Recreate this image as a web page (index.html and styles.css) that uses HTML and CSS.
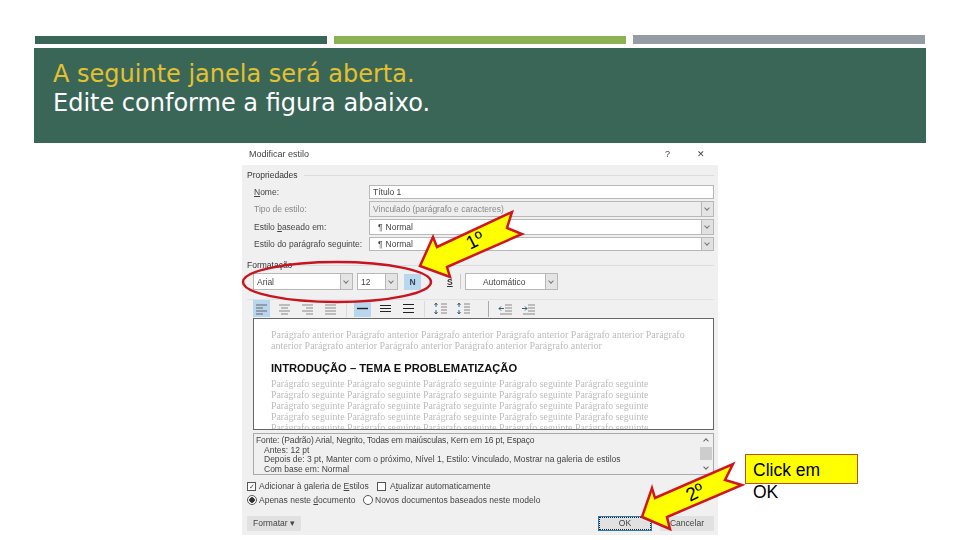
FILE: index.html
```html
<!DOCTYPE html>
<html lang="pt">
<head>
    <meta charset="UTF-8">
    <meta name="viewport" content="width=device-width, initial-scale=1.0">
    <title>Modificar estilo</title>
    <link rel="stylesheet" href="styles.css">
</head>
<body>
    <svg class="defs" width="0" height="0">
        <symbol id="al-left" viewBox="0 0 17 17"><path d="M3 5h11M3 8h7M3 11h11M3 14h7" stroke="#666" fill="none"/></symbol>
        <symbol id="al-center" viewBox="0 0 17 17"><path d="M3 5h11M5 8h7M3 11h11M5 14h7" stroke="#888" fill="none"/></symbol>
        <symbol id="al-right" viewBox="0 0 17 17"><path d="M3 5h11M7 8h7M3 11h11M7 14h7" stroke="#888" fill="none"/></symbol>
        <symbol id="al-just" viewBox="0 0 17 17"><path d="M3 5h11M3 8h11M3 11h11M3 14h11" stroke="#888" fill="none"/></symbol>
        <symbol id="sp-a" viewBox="0 0 17 17"><path d="M3 8.500h11" stroke="#222" stroke-width="1.400"/></symbol>
        <symbol id="sp-b" viewBox="0 0 17 17"><path d="M3 5.500h11M3 8.500h11M3 11.500h11" stroke="#222"/></symbol>
        <symbol id="sp-c" viewBox="0 0 17 17"><path d="M3 4.500h11M3 8.500h11M3 12.500h11" stroke="#222"/></symbol>
        <symbol id="para-up" viewBox="0 0 17 17"><path d="M9 4h6M9 7h6M9 10h6M9 13h6" stroke="#888"/><path d="M4 7V3M2.500 5 4 3l1.500 2M4 10v4M2.500 12 4 14l1.500-2" stroke="#355f80" fill="none"/></symbol>
        <symbol id="indent" viewBox="0 0 17 17"><path d="M8 5h7M8 8h7M8 11h7M3 14h12" stroke="#888"/><path d="M2 8.500h5M4 6.500l-2 2 2 2" stroke="#2f6470" fill="none"/></symbol>
        <symbol id="outdent" viewBox="0 0 17 17"><path d="M8 5h7M8 8h7M8 11h7M3 14h12" stroke="#888"/><path d="M2 8.500h5M5 6.500l2 2-2 2" stroke="#2f6470" fill="none"/></symbol>
    </svg>

    <div class="bars">
        <div class="bar bar-green"></div>
        <div class="bar bar-lime"></div>
        <div class="bar bar-grey"></div>
    </div>

    <div class="banner">
        <p class="banner-first">A seguinte janela será aberta.</p>
        <p>Edite conforme a figura abaixo.</p>
    </div>

    <div class="dialog">
        <div class="dialog-title">
            <span>Modificar estilo</span>
            <span class="title-help">?</span>
            <span class="title-close">✕</span>
        </div>
        <div class="dialog-body">
            <div class="legend">Propriedades</div>
            <div class="prop-rows">
                <label><u>N</u>ome:</label>
                <div class="field">Título 1</div>
                <label class="off">Tipo de estilo:</label>
                <div class="field field-off">Vinculado (parágrafo e caracteres)<span class="drop"></span></div>
                <label>Estilo <u>b</u>aseado em:</label>
                <div class="field"><span class="pilcrow">¶</span> Normal<span class="drop drop-on"></span></div>
                <label>Estilo do parágrafo seguinte:</label>
                <div class="field"><span class="pilcrow">¶</span> Normal<span class="drop drop-on"></span></div>
            </div>

            <div class="legend legend-format">Formatação</div>
            <div class="font-row">
                <div class="field font-name">Arial<span class="drop"></span></div>
                <div class="field font-size">12<span class="drop"></span></div>
                <div class="bold-btn">N</div>
                <div class="under-btn">S</div>
                <div class="font-sep"></div>
                <div class="field font-color">Automático<span class="drop"></span></div>
            </div>
            <div class="icon-row">
                <svg class="tool tool-on"><use href="#al-left"/></svg>
                <svg class="tool"><use href="#al-center"/></svg>
                <svg class="tool"><use href="#al-right"/></svg>
                <svg class="tool"><use href="#al-just"/></svg>
                <div class="tool-sep"></div>
                <svg class="tool tool-on"><use href="#sp-a"/></svg>
                <svg class="tool"><use href="#sp-b"/></svg>
                <svg class="tool"><use href="#sp-c"/></svg>
                <div class="tool-sep"></div>
                <svg class="tool"><use href="#para-up"/></svg>
                <svg class="tool"><use href="#para-up"/></svg>
                <div class="tool-sep tool-sep-dark"></div>
                <svg class="tool"><use href="#indent"/></svg>
                <svg class="tool"><use href="#outdent"/></svg>
            </div>

            <div class="preview">
                <p class="ghost ghost-before">Parágrafo anterior Parágrafo anterior Parágrafo anterior Parágrafo anterior Parágrafo anterior Parágrafo<br>
                anterior Parágrafo anterior Parágrafo anterior Parágrafo anterior Parágrafo anterior</p>
                <p class="preview-title">INTRODUÇÃO – TEMA E PROBLEMATIZAÇÃO</p>
                <p class="ghost">Parágrafo seguinte Parágrafo seguinte Parágrafo seguinte Parágrafo seguinte Parágrafo seguinte<br>
                Parágrafo seguinte Parágrafo seguinte Parágrafo seguinte Parágrafo seguinte Parágrafo seguinte<br>
                Parágrafo seguinte Parágrafo seguinte Parágrafo seguinte Parágrafo seguinte Parágrafo seguinte<br>
                Parágrafo seguinte Parágrafo seguinte Parágrafo seguinte Parágrafo seguinte Parágrafo seguinte<br>
                Parágrafo seguinte Parágrafo seguinte Parágrafo seguinte Parágrafo seguinte Parágrafo seguinte</p>
            </div>

            <div class="desc">
                <div class="desc-text">
                    <div class="desc-first">Fonte: (Padrão) Arial, Negrito, Todas em maiúsculas, Kern em 16 pt, Espaço</div>
                    <div class="desc-sub">Antes: 12 pt</div>
                    <div class="desc-sub">Depois de: 3 pt, Manter com o próximo, Nível 1, Estilo: Vinculado, Mostrar na galeria de estilos</div>
                    <div class="desc-sub">Com base em: Normal</div>
                </div>
                <div class="scroll">
                    <span class="scroll-arrow scroll-up"></span>
                    <span class="scroll-thumb"></span>
                    <span class="scroll-arrow scroll-down"></span>
                </div>
            </div>

            <div class="option-row">
                <span class="check">✓</span><span class="option-a">Adicionar à galeria de <u>E</u>stilos</span>
                <span class="check check-empty"></span><span>A<u>t</u>ualizar automaticamente</span>
            </div>
            <div class="option-row option-radios">
                <span class="radio radio-on"></span><span class="option-b">Apenas neste <u>d</u>ocumento</span>
                <span class="radio"></span><span>Novos documentos baseados neste modelo</span>
            </div>

            <div class="button-row">
                <div class="btn btn-format">Formatar ▾</div>
                <div class="btn btn-ok">OK</div>
                <div class="btn">Cancelar</div>
            </div>
        </div>
    </div>

    <div class="callout">Click em OK</div>

    <svg class="marks" width="960" height="540" viewBox="0 0 960 540">
        <ellipse cx="337" cy="282" rx="94" ry="20" fill="none" stroke="#c8141e" stroke-width="2.500"/>
        <polygon class="arrow" points="420,266 433,237 437,247 512,212 507,228 522,234 447,267 450,277"/>
        <text class="arrow-label" transform="translate(470 250) rotate(-27)">1º</text>
        <polygon class="arrow" points="642,517 652,488 655,498 733,464 725,480 742,485 667,517 670,529"/>
        <text class="arrow-label" transform="translate(690 502) rotate(-27)">2º</text>
    </svg>
</body>
</html>
```

FILE: styles.css
```css
:root {
    --green: #3a6658;
    --lime: #8db255;
    --grey: #969ca4;
    --dialog-grey: #f0f0f0;
}
body {
    margin: 0;
    width: 960px;
    height: 540px;
    position: relative;
    overflow: hidden;
    background-color: #fff;
    font-family: 'Liberation Sans', sans-serif;
}
p {
    margin: 0;
}
.defs {
    position: absolute;
}
.bars {
    display: flex;
    gap: 7px;
    margin: 36px 35px 0;
}
.bar {
    flex: 1;
    height: 8px;
}
.bar-green { background-color: var(--green); }
.bar-lime { background-color: var(--lime); }
.bar-grey { background-color: var(--grey); height: 9px; margin-top: -1px; }

.banner {
    box-sizing: border-box;
    margin: 4px 34px 0;
    height: 95px;
    padding: 12px 19px;
    background-color: var(--green);
    color: #fff;
    font-family: 'DejaVu Sans', sans-serif;
    font-size: 24px;
    line-height: 29px;
}
.banner-first {
    color: #e3c12f;
}

.dialog {
    width: 476px;
    height: 392px;
    margin-left: 242px;
    font-size: 8.500px;
    color: #444;
    filter: blur(0.5px);
}
.dialog-title {
    display: flex;
    align-items: center;
    height: 22px;
    padding: 0 13px 0 7px;
    background-color: #fff;
    font-size: 9px;
}
.title-help {
    margin-left: auto;
    margin-right: 27px;
}
.dialog-body {
    box-sizing: border-box;
    height: 370px;
    padding: 5px 4px 0 5px;
    background-color: var(--dialog-grey);
}
.legend {
    display: flex;
    align-items: center;
    gap: 6px;
    height: 10px;
    font-size: 8.500px;
    color: #333;
}
.legend::after {
    content: "";
    flex: 1;
    height: 1px;
    background-color: #dcdcdc;
}
.prop-rows {
    display: grid;
    grid-template-columns: 122px 1fr;
    grid-template-rows: 14px 16px 16px 14px;
    row-gap: 2px;
    margin-top: 5px;
    align-items: center;
}
.prop-rows label {
    padding-left: 7px;
}
.prop-rows .off {
    color: #888;
}
.field {
    box-sizing: border-box;
    height: 100%;
    display: flex;
    align-items: center;
    padding-left: 3px;
    background-color: #fff;
    border: 1px solid #b8b8b8;
    position: relative;
}
.field-off {
    background-color: #eee;
    color: #888;
}
.pilcrow {
    margin: 0 3px 0 5px;
}
.drop {
    position: absolute;
    right: 0;
    top: 0;
    bottom: 0;
    width: 11px;
    background-color: #e4e4e4;
    border-left: 1px solid #b8b8b8;
}
.drop::after {
    content: "";
    position: absolute;
    left: 3px;
    top: 50%;
    width: 3px;
    height: 3px;
    margin-top: -3px;
    border-right: 1px solid #777;
    border-bottom: 1px solid #777;
    transform: rotate(45deg);
}
.drop-on {
    background-color: #e1e1e1;
}
.legend-format {
    margin-top: 9px;
}
.font-row {
    display: flex;
    align-items: center;
    height: 17px;
    margin-top: 3px;
    padding-left: 6px;
}
.font-name { width: 100px; }
.font-size { width: 41px; margin-left: 4px; }
.bold-btn {
    width: 17px;
    height: 16px;
    margin-left: 6px;
    background-color: #b8d6ee;
    color: #345;
    font-weight: bold;
    text-align: center;
    line-height: 16px;
}
.under-btn {
    margin-left: 26px;
    color: #333;
    font-weight: bold;
    text-decoration: underline;
}
.font-sep {
    width: 1px;
    height: 15px;
    margin: 0 4px 0 7px;
    background-color: #c8c8c8;
}
.font-color {
    width: 93px;
    justify-content: center;
    padding: 0 14px 0 0;
}
.icon-row {
    display: flex;
    align-items: center;
    height: 17px;
    margin-top: 9px;
    padding-left: 6px;
    border-top: 1px solid #e2e2e2;
}
.tool {
    width: 17px;
    height: 17px;
    margin-right: 6px;
}
.tool-on {
    background-color: #b8d6ee;
}
.tool-sep {
    width: 1px;
    height: 16px;
    margin: 0 7px 0 1px;
    background-color: #dadada;
}
.tool-sep-dark {
    margin-left: 10px;
    margin-right: 8px;
    background-color: #aaa;
}
.preview {
    box-sizing: border-box;
    height: 112px;
    margin: 1px 0 0 6px;
    padding: 10px 10px 0 17px;
    overflow: hidden;
    background-color: #fff;
    border: 1px solid #666;
}
.ghost {
    font-family: 'Liberation Serif', serif;
    font-size: 9.850px;
    line-height: 11px;
    color: #bcbcbc;
    white-space: nowrap;
}
.ghost-before {
    height: 24px;
    font-size: 10px;
}
.preview-title {
    margin: 8px 0 3px;
    font-size: 11.200px;
    line-height: 14px;
    font-weight: bold;
    color: #111;
}
.desc {
    box-sizing: border-box;
    display: flex;
    height: 42px;
    margin: 3px 0 0 6px;
    background-color: var(--dialog-grey);
    border: 1px solid #aaa;
}
.desc-text {
    flex: 1;
    padding: 2px 0 0 2px;
    line-height: 9.500px;
}
.desc-first {
    letter-spacing: -0.130px;
}
.desc-sub {
    padding-left: 8px;
}
.scroll {
    width: 14px;
    display: flex;
    flex-direction: column;
    align-items: center;
}
.scroll-arrow {
    width: 3px;
    height: 3px;
    border-top: 1px solid #666;
    border-left: 1px solid #666;
}
.scroll-up {
    margin-top: 5px;
    transform: rotate(45deg);
}
.scroll-down {
    margin-top: 5px;
    transform: rotate(225deg);
}
.scroll-thumb {
    width: 12px;
    height: 13px;
    margin-top: 4px;
    background-color: #cdcdcd;
}
.option-row {
    display: flex;
    align-items: center;
    height: 14px;
    margin-top: 4px;
}
.option-radios {
    margin-top: 0;
}
.check {
    box-sizing: border-box;
    width: 9px;
    height: 9px;
    margin-right: 3px;
    border: 1px solid #555;
    background-color: #fff;
    font-size: 7px;
    line-height: 7px;
    text-align: center;
}
.check-empty {
    margin-right: 4px;
}
.option-a {
    width: 118px;
}
.option-b {
    width: 104px;
}
.radio {
    box-sizing: border-box;
    width: 10px;
    height: 10px;
    margin-right: 2px;
    border: 1px solid #555;
    border-radius: 50%;
    background-color: #fff;
}
.radio-on {
    background: radial-gradient(circle, #333 0 2.500px, #fff 3px);
}
.button-row {
    display: flex;
    gap: 8px;
    margin-top: 9px;
}
.btn {
    box-sizing: border-box;
    width: 54px;
    height: 15px;
    background-color: #e1e1e1;
    text-align: center;
    line-height: 15px;
}
.btn-format {
    margin-right: auto;
}
.btn-ok {
    border: 1px solid #2a7ab8;
    outline: 1px dotted #222;
    outline-offset: -2px;
    line-height: 13px;
}

.callout {
    position: absolute;
    left: 745px;
    top: 454px;
    box-sizing: border-box;
    width: 113px;
    height: 30px;
    padding: 4px 20px 0 7px;
    background-color: #ffff00;
    border: 1px solid #b5502a;
    font-size: 17.500px;
    line-height: 22px;
    color: #000;
}
.marks {
    position: absolute;
    left: 0;
    top: 0;
}
.arrow {
    fill: #ffff00;
    stroke: #d0161b;
    stroke-width: 2.500;
}
.arrow-label {
    font-family: 'Liberation Sans', sans-serif;
    font-size: 19px;
    fill: #000;
}
```
